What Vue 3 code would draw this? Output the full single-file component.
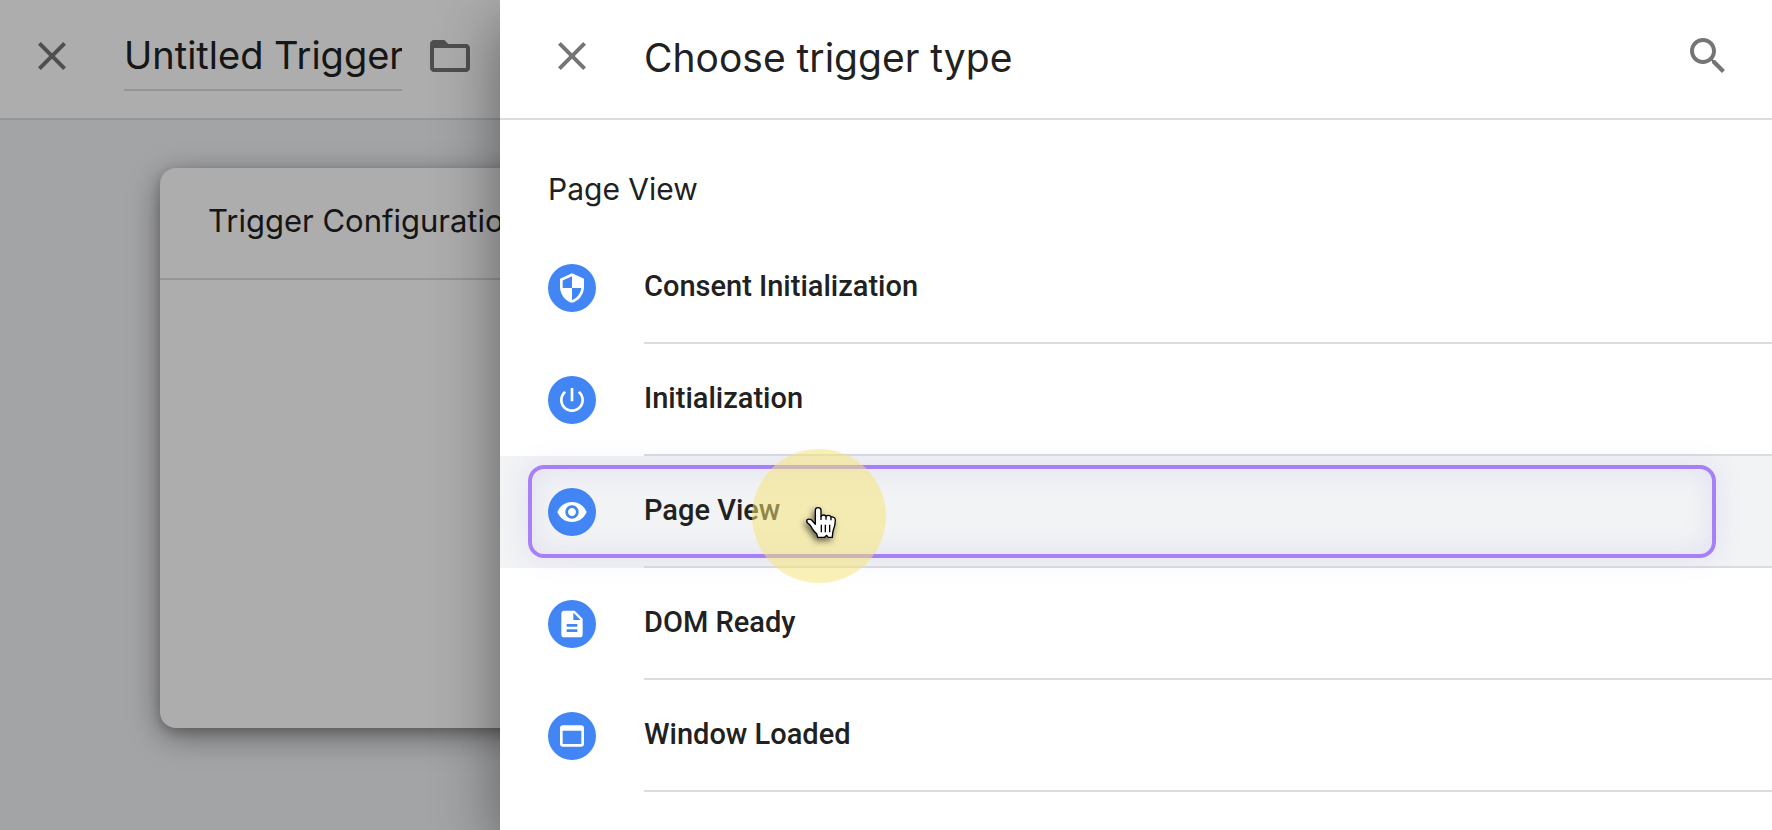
<script setup>
import { ref } from 'vue'

const triggerName = ref('Untitled Trigger')
const active = ref('pageview')

const triggers = [
  {
    id: 'consent',
    label: 'Consent Initialization',
    icon: 'M12 1L3 5v6c0 5.55 3.84 10.74 9 12 5.16-1.26 9-6.45 9-12V5l-9-4zm0 10.99h7c-.53 4.12-3.28 7.79-7 8.94V12H5V6.3l7-3.11v8.8z',
  },
  {
    id: 'init',
    label: 'Initialization',
    icon: 'M13 3h-2v10h2V3zm4.83 2.17l-1.42 1.42C17.99 7.86 19 9.81 19 12c0 3.87-3.13 7-7 7s-7-3.13-7-7c0-2.19 1.01-4.14 2.58-5.42L6.17 5.17C4.23 6.82 3 9.26 3 12c0 4.97 4.03 9 9 9s9-4.03 9-9c0-2.74-1.23-5.18-3.17-6.83z',
  },
  {
    id: 'pageview',
    label: 'Page View',
    icon: 'M12 4.5C7 4.5 2.73 7.61 1 12c1.73 4.39 6 7.5 11 7.5s9.27-3.11 11-7.5c-1.73-4.39-6-7.5-11-7.5zM12 17c-2.76 0-5-2.24-5-5s2.24-5 5-5 5 2.24 5 5-2.24 5-5 5zm0-8c-1.66 0-3 1.34-3 3s1.34 3 3 3 3-1.34 3-3-1.34-3-3-3z',
  },
  {
    id: 'dom',
    label: 'DOM Ready',
    icon: 'M14 2H6c-1.1 0-1.99.9-1.99 2L4 20c0 1.1.89 2 1.99 2H18c1.1 0 2-.9 2-2V8l-6-6zm2 16H8v-2h8v2zm0-4H8v-2h8v2zm-3-5V3.5L18.5 9H13z',
  },
  {
    id: 'window',
    label: 'Window Loaded',
    icon: 'M19 4H5c-1.11 0-2 .9-2 2v12c0 1.1.89 2 2 2h14c1.1 0 2-.9 2-2V6c0-1.1-.89-2-2-2zm0 14H5V8h14v10z',
  },
]
</script>

<template>
  <div class="app">
    <main class="editor">
      <header class="bar editor-bar">
        <button class="icon-btn" type="button" aria-label="Close trigger">
          <svg viewBox="0 0 24 24"><path d="M19 6.41L17.59 5 12 10.59 6.41 5 5 6.41 10.59 12 5 17.59 6.41 19 12 13.41 17.59 19 19 17.59 13.41 12z" /></svg>
        </button>
        <input v-model="triggerName" class="name" type="text" aria-label="Trigger name" />
        <button class="icon-btn" type="button" aria-label="Move to folder">
          <svg viewBox="0 0 24 24"><path d="M9.17 4l2 2H20c1.1 0 2 .9 2 2v10c0 1.1-.9 2-2 2H4c-1.1 0-2-.9-2-2V6c0-1.1.9-2 2-2zM20 8H4v10h16z" fill-rule="evenodd" /></svg>
        </button>
      </header>
      <section class="card">
        <h2 class="card-title">Trigger Configuration</h2>
      </section>
      <div class="scrim"></div>
    </main>

    <aside class="panel">
      <header class="bar panel-bar">
        <button class="icon-btn" type="button" aria-label="Close panel">
          <svg viewBox="0 0 24 24"><path d="M19 6.41L17.59 5 12 10.59 6.41 5 5 6.41 10.59 12 5 17.59 6.41 19 12 13.41 17.59 19 19 17.59 13.41 12z" /></svg>
        </button>
        <h1 class="title">Choose trigger type</h1>
        <button class="icon-btn" type="button" aria-label="Search">
          <svg viewBox="0 0 24 24"><path d="M15.5 14h-.79l-.28-.27C15.41 12.59 16 11.11 16 9.5 16 5.91 13.09 3 9.5 3S3 5.91 3 9.5 5.91 16 9.5 16c1.61 0 3.09-.59 4.23-1.57l.27.28v.79l5 4.99L20.49 19l-4.99-5zm-6 0C7.01 14 5 11.99 5 9.5S7.01 5 9.5 5 14 7.01 14 9.5 11.99 14 9.5 14z" /></svg>
        </button>
      </header>

      <h2 class="group">Page View</h2>
      <ul class="list">
        <li v-for="t in triggers" :key="t.id" class="item" :class="{ active: t.id === active }">
          <button class="row" type="button" @click="active = t.id">
            <span class="badge"><svg viewBox="0 0 24 24"><path :d="t.icon" /></svg></span>
            <span class="label">{{ t.label }}</span>
          </button>
          <template v-if="t.id === active">
            <div class="outline"></div>
            <div class="halo">
              <svg class="hand" viewBox="66 72 108 114">
                <path
                  d="M106 133V91c0-5 4-8 8-8 5 0 9 3 9 8v18c2-3 5-4 8-4s6 2 7 4c2-2 4-3 7-3 4 0 7 2 8 5 7-1 13 2 13 9 0 13-3 23-6 30-2 5-2 9-3 22h-12l-5-6-6 6h-21l-3-11c-5-4-10-9-14-16-2-5-5-10-11-14-4-3-6-7-4-11 3-4 10-3 14 0z"
                />
                <path class="creases" d="M124 134v23M136 134v23M149 134v23M138 109v10M153 111v10M123 108v12" />
              </svg>
            </div>
          </template>
        </li>
      </ul>
    </aside>
  </div>
</template>

<style>
html,
body {
  margin: 0;
  background: #f1f3f4;
}
</style>

<style scoped>
.app {
  position: relative;
  min-height: 100vh;
  overflow: hidden;
  color: #212121;
  font-family: Roboto, "Liberation Sans", sans-serif;
}

.editor {
  position: relative;
  min-height: 100vh;
  background: #f1f2f5;
}

.scrim {
  position: absolute;
  inset: 0;
  background: rgba(0, 0, 0, 0.32);
}

.bar {
  box-sizing: border-box;
  display: flex;
  align-items: center;
  height: 120px;
  padding-bottom: 6px;
  border-bottom: 2px solid #dadce0;
  background: #fff;
}

.editor-bar {
  padding-left: 28px;
}

.panel-bar {
  padding-left: 48px;
  padding-right: 40px;
}

.icon-btn {
  flex: none;
  display: block;
  width: 48px;
  height: 48px;
  padding: 0;
  border: 0;
  background: none;
  cursor: pointer;
}

.icon-btn svg {
  display: block;
  width: 48px;
  height: 48px;
  fill: #757575;
}

.name {
  box-sizing: border-box;
  width: 278px;
  height: 70px;
  margin: 0 24px 0 48px;
  padding: 0;
  border: 0;
  border-bottom: 2px solid #dadce0;
  background: none;
  color: inherit;
  font: 400 38px Inter, sans-serif;
  outline: 0;
}

.card {
  box-sizing: border-box;
  min-height: 560px;
  margin: 48px 160px 0;
  border-radius: 16px;
  background: #fff;
  box-shadow: 0 8px 32px rgba(0, 0, 0, 0.4), 0 4px 12px rgba(0, 0, 0, 0.2);
}

.card-title {
  box-sizing: border-box;
  height: 112px;
  margin: 0;
  padding: 0 48px;
  border-bottom: 2px solid #dadce0;
  font: 400 31px/106px Inter, sans-serif;
}

.panel {
  position: absolute;
  inset: 0 0 0 500px;
  background: #fff;
  box-shadow: 0 20px 60px rgba(0, 0, 0, 0.44);
}

.title {
  flex: 1;
  margin: 0 0 0 48px;
  padding-top: 4px;
  font: 400 39px/48px Inter, sans-serif;
}

.group {
  box-sizing: border-box;
  height: 112px;
  margin: 0;
  padding: 48px 48px 0;
  font: 400 30px/42px Inter, sans-serif;
}

.list {
  margin: 0;
  padding: 0;
  list-style: none;
}

.item {
  position: relative;
}

.item.active {
  z-index: 1;
  background: #f1f3f4;
}

.row {
  display: flex;
  align-items: center;
  gap: 48px;
  width: 100%;
  height: 112px;
  padding: 0 0 0 48px;
  border: 0;
  background: none;
  color: inherit;
  font: 500 29px Roboto, sans-serif;
  text-align: left;
  cursor: pointer;
}

.badge {
  flex: none;
  display: flex;
  align-items: center;
  justify-content: center;
  width: 48px;
  height: 48px;
  border-radius: 50%;
  background: #4285f4;
}

.badge svg {
  width: 32px;
  height: 32px;
  fill: #fff;
}

.label {
  box-sizing: border-box;
  flex: 1;
  height: 112px;
  border-bottom: 2px solid #dadce0;
  line-height: 108px;
}

.outline {
  position: absolute;
  inset: 9px 56px 10px 28px;
  border: 4px solid #a880f6;
  border-radius: 16px;
  box-shadow: 0 0 28px rgba(130, 90, 240, 0.12), inset 0 0 28px rgba(130, 90, 240, 0.12);
  pointer-events: none;
}

.halo {
  position: absolute;
  top: -7px;
  left: 252px;
  width: 134px;
  height: 134px;
  border-radius: 50%;
  background: rgba(246, 228, 116, 0.52);
  pointer-events: none;
}

.hand {
  position: absolute;
  top: 55px;
  left: 50px;
  width: 36px;
  height: 38px;
  overflow: visible;
  fill: #fff;
  stroke: #000;
  stroke-width: 4;
  stroke-linejoin: round;
  filter: drop-shadow(-2px 3px 3px rgba(0, 0, 0, 0.6));
}

.hand .creases {
  fill: none;
}
</style>
